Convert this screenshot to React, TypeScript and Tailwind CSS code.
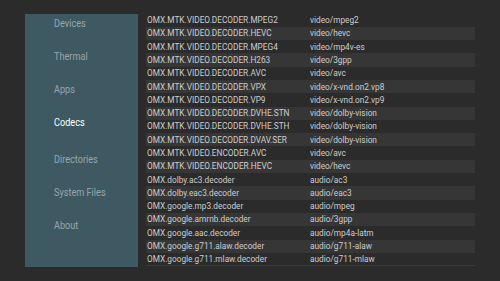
import React from "react";

const rows: [string, string][] = [
  ["OMX.MTK.VIDEO.DECODER.MPEG2", "video/mpeg2"],
  ["OMX.MTK.VIDEO.DECODER.HEVC", "video/hevc"],
  ["OMX.MTK.VIDEO.DECODER.MPEG4", "video/mp4v-es"],
  ["OMX.MTK.VIDEO.DECODER.H263", "video/3gpp"],
  ["OMX.MTK.VIDEO.DECODER.AVC", "video/avc"],
  ["OMX.MTK.VIDEO.DECODER.VPX", "video/x-vnd.on2.vp8"],
  ["OMX.MTK.VIDEO.DECODER.VP9", "video/x-vnd.on2.vp9"],
  ["OMX.MTK.VIDEO.DECODER.DVHE.STN", "video/dolby-vision"],
  ["OMX.MTK.VIDEO.DECODER.DVHE.STH", "video/dolby-vision"],
  ["OMX.MTK.VIDEO.DECODER.DVAV.SER", "video/dolby-vision"],
  ["OMX.MTK.VIDEO.ENCODER.AVC", "video/avc"],
  ["OMX.MTK.VIDEO.ENCODER.HEVC", "video/hevc"],
  ["OMX.dolby.ac3.decoder", "audio/ac3"],
  ["OMX.dolby.eac3.decoder", "audio/eac3"],
  ["OMX.google.mp3.decoder", "audio/mpeg"],
  ["OMX.google.amrnb.decoder", "audio/3gpp"],
  ["OMX.google.aac.decoder", "audio/mp4a-latm"],
  ["OMX.google.g711.alaw.decoder", "audio/g711-alaw"],
  ["OMX.google.g711.mlaw.decoder", "audio/g711-mlaw"],
];

const menu = ["Devices", "Thermal", "Apps", "Codecs", "Directories", "System Files", "About"];

export default function App() {
  return (
    <div
      className="w-[500px] h-[281px] bg-[#2b2b2b] overflow-hidden flex pl-[25px] pt-[13.5px]"
      style={{ fontFamily: "Roboto, 'Noto Sans', sans-serif" }}
    >
      <div className="w-[112.5px] h-[253px] bg-[#3f5962] flex flex-col pt-[4.5px] pl-[29px] gap-[21px]">
        {menu.map((m) => (
          <div
            key={m}
            className={
              "h-[12px] leading-[12px] text-[10.5px] whitespace-nowrap origin-left scale-x-[0.87] " +
              (m === "Codecs" ? "text-white" : "text-[#98a6ab]") +
              (m === "Directories" ? " mt-[3.7px]" : "")
            }
          >
            {m}
          </div>
        ))}
      </div>
      <div className="ml-[8px] w-[329.5px] flex flex-col">
        {rows.map(([a, b], i) => (
          <div
            key={i}
            className={
              "h-[13.3px] flex items-center text-[9.5px] text-[#cdcdcd] pl-px " +
              (i % 2 === 1 ? "bg-[#363636]" : "") +
              (i === rows.length - 1 ? " border-b border-[#3a3a3a]" : "")
            }
          >
            <div className="w-[163.5px] whitespace-nowrap origin-left scale-x-[0.87]">{a}</div>
            <div className="whitespace-nowrap origin-left scale-x-[0.87]">{b}</div>
          </div>
        ))}
      </div>
    </div>
  );
}
